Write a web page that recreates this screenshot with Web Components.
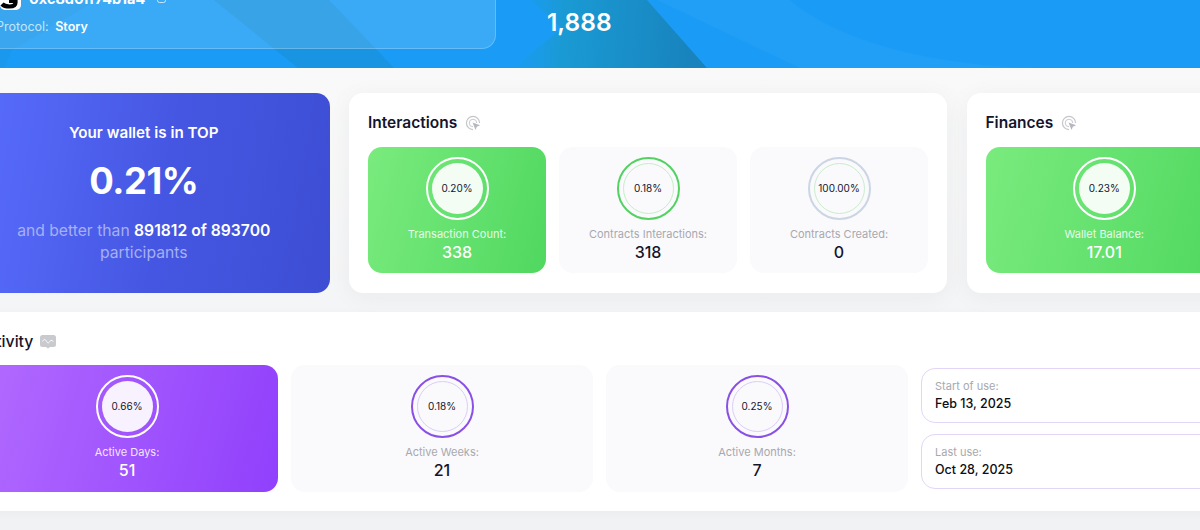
<!DOCTYPE html>
<html>
<head>
<meta charset="utf-8">
<title>Wallet stats</title>
<style>
  html, body { margin: 0; height: 100%; overflow: hidden; background: #f1f2f3; }
  body { font-family: Inter, "Noto Sans", sans-serif; color: #14152c; }
  /* page was photographed scrolled 42px to the right */
  stats-page { margin: 0 0 0 -42px; width: 1284px; }
</style>
</head>
<body>
<stats-page>
  <top-banner count="1,888" address="0xc8d0ff74b1a4" protocol="Story"></top-banner>
  <stats-band>
    <rank-card percent="0.21%" better="891812" total="893700"></rank-card>
    <stat-card heading="Interactions" style="--cols:repeat(3,1fr)">
      <stat-tile tone="green" active percent="0.20%" label="Transaction Count:" value="338"></stat-tile>
      <stat-tile tone="green" percent="0.18%" label="Contracts Interactions:" value="318"></stat-tile>
      <stat-tile tone="grey" percent="100.00%" label="Contracts Created:" value="0"></stat-tile>
    </stat-card>
    <stat-card heading="Finances" style="--cols:1fr">
      <stat-tile tone="green" active percent="0.23%" label="Wallet Balance:" value="17.01"></stat-tile>
    </stat-card>
  </stats-band>
  <activity-panel heading="Activity">
    <stat-tile tone="purple" active percent="0.66%" label="Active Days:" value="51"></stat-tile>
    <stat-tile tone="purple" percent="0.18%" label="Active Weeks:" value="21"></stat-tile>
    <stat-tile tone="purple" percent="0.25%" label="Active Months:" value="7"></stat-tile>
    <div style="display:flex;flex-direction:column;gap:11px;padding-top:3px">
      <date-box label="Start of use:" value="Feb 13, 2025"></date-box>
      <date-box label="Last use:" value="Oct 28, 2025"></date-box>
    </div>
  </activity-panel>
</stats-page>

<script>
class StatsPage extends HTMLElement {
  constructor() {
    super();
    const shadow = this.attachShadow({ mode: 'open' });
    shadow.innerHTML = `
      <style>:host { display: flex; flex-direction: column; }</style>
      <slot></slot>`;
  }
}

class TopBanner extends HTMLElement {
  constructor() {
    super();
    const shadow = this.attachShadow({ mode: 'open' });
    shadow.innerHTML = `
      <style>
        :host { display: block; position: relative; height: 68px; overflow: hidden; background: #1a9cf6; color: #fff; }
        .shapes { position: absolute; left: 42px; top: 0; width: 1200px; height: 68px; }
        .row { position: relative; display: flex; align-items: flex-start; height: 68px; }
        .glass {
          box-sizing: border-box; width: 538px; height: 49px;
          padding: 0 0 0 42px; display: flex; flex-direction: column;
          background: rgba(255,255,255,.14); border: 1px solid rgba(255,255,255,.22); border-top: 0; border-left: 0;
          border-bottom-right-radius: 14px;
        }
        .who { display: flex; align-items: flex-end; height: 11px; }
        .logo { flex: none; display: block; margin-right: 8px; margin-bottom: 1px; }
        .addr { font-size: 14.5px; font-weight: 700; line-height: 16px; white-space: nowrap; margin-bottom: 4.5px; }
        .copy { margin: 0 0 8px 12px; }
        .proto { font-size: 12.5px; line-height: 16px; margin: 8px 0 0 -4px; white-space: nowrap; color: rgba(255,255,255,.72); }
        .proto b { font-weight: 600; color: #fff; margin-left: 3px; }
        .count { font-size: 24.5px; font-weight: 600; line-height: 32px; margin: 6px 0 0 51px; }
      </style>
      <svg class="shapes" viewBox="0 0 1200 68" preserveAspectRatio="none">
        <defs>
          <linearGradient id="deep" gradientUnits="userSpaceOnUse" x1="490" y1="30" x2="695" y2="45">
            <stop offset="0" stop-color="#1a9cf6" stop-opacity="0"/>
            <stop offset=".35" stop-color="#1a9ad4"/>
            <stop offset="1" stop-color="#1883bd"/>
          </linearGradient>
        </defs>
        <path d="M214 0L298 68H394L329 0Z" fill="#1583b8" opacity=".32"/>
        <path d="M513 68L562 28L530 0H647L707 68Z" fill="url(#deep)"/>
        <path d="M12 50L97 0H0V68H4Z" fill="#1583b8" opacity=".14"/>
        <path d="M790 0C860 60 1000 68 1040 68H800L657 0Z" fill="#fff" opacity=".03"/>
      </svg>
      <div class="row">
        <div class="glass">
          <div class="who">
            <svg class="logo" width="21" height="20" viewBox="0 0 21 20">
              <rect width="21" height="20" rx="5" fill="#fff"/>
              <path d="M9 11H15.5V12.5C15.5 15.5 13 16.5 9.5 16.5C6.5 16.5 3.8 16 2 14" fill="none" stroke="#000" stroke-width="4.2"/>
            </svg>
            <span class="addr">${this.getAttribute('address')}</span>
            <svg class="copy" width="9" height="10" viewBox="0 0 9 10" fill="none" stroke="rgba(255,255,255,.7)"><rect x=".5" y=".5" width="8" height="9" rx="2"/></svg>
          </div>
          <div class="proto">Protocol: <b>${this.getAttribute('protocol')}</b></div>
        </div>
        <div class="count">${this.getAttribute('count')}</div>
      </div>`;
  }
}

class StatsBand extends HTMLElement {
  constructor() {
    super();
    const shadow = this.attachShadow({ mode: 'open' });
    shadow.innerHTML = `
      <style>
        :host {
          display: grid; grid-template-columns: 371.5px 598px 275.5px; column-gap: 19.5px;
          padding: 25px 0 19px; height: 200px;
          background: linear-gradient(#f9f9f9, #f4f5f6);
        }
      </style>
      <slot></slot>`;
  }
}

class RankCard extends HTMLElement {
  constructor() {
    super();
    const shadow = this.attachShadow({ mode: 'open' });
    shadow.innerHTML = `
      <style>
        :host {
          display: flex; flex-direction: column; align-items: center; box-sizing: border-box;
          padding: 29px 16px 0; border-radius: 14px; color: #fff; text-align: center;
          background: linear-gradient(100deg, #5a6eff 0%, #4557e2 55%, #3d4ed4 100%);
        }
        .top { font-size: 15.2px; font-weight: 600; line-height: 22px; }
        .pct { font-size: 36.5px; font-weight: 700; line-height: 48px; margin-top: 13px; letter-spacing: -.5px; }
        .rest { font-size: 15.7px; line-height: 22px; margin-top: 15px; color: #a6b0f2; width: 290px; }
        .rest b { font-weight: 600; color: #fff; }
      </style>
      <div class="top">Your wallet is in TOP</div>
      <div class="pct">${this.getAttribute('percent')}</div>
      <div class="rest">and better than <b>${this.getAttribute('better')} of ${this.getAttribute('total')}</b> participants</div>`;
  }
}

const CLICK_ICON = `
  <svg width="16" height="16" viewBox="0 0 17 17" fill="none" stroke="#c4c6cc" stroke-width="1.3">
    <path d="M15.5 8.5A7 7 0 1 0 8.5 15.5"/>
    <path d="M12.5 8.5A4 4 0 1 0 8.5 12.5" stroke-width="1"/>
    <path d="M8 8l8 3-3.4 1.4L11.2 16z" fill="#b6b8bf" stroke="none"/>
  </svg>`;

class StatCard extends HTMLElement {
  constructor() {
    super();
    const shadow = this.attachShadow({ mode: 'open' });
    shadow.innerHTML = `
      <style>
        :host {
          display: block; box-sizing: border-box; padding: 20px 19px 20px 19px;
          background: #fff; border-radius: 14px; box-shadow: 0 4px 24px rgba(30,40,60,.05);
        }
        h2 { display: flex; align-items: center; gap: 8px; margin: 0 0 14px; font-size: 15.5px; font-weight: 600; line-height: 20px; }
        .tiles { display: grid; grid-template-columns: var(--cols); column-gap: 13px; }
      </style>
      <h2>${this.getAttribute('heading')} ${CLICK_ICON}</h2>
      <div class="tiles"><slot></slot></div>`;
  }
}

class ActivityPanel extends HTMLElement {
  constructor() {
    super();
    const shadow = this.attachShadow({ mode: 'open' });
    shadow.innerHTML = `
      <style>
        :host { display: block; padding: 20px 18px 19px; background: #fff; height: 160px; --tile-h: 127px; box-shadow: 0 2px 10px rgba(30,40,60,.03); }
        h2 { display: flex; align-items: center; gap: 7px; margin: 0 0 13px; font-size: 15.8px; font-weight: 500; line-height: 20px; }
        .tiles { display: grid; grid-template-columns: repeat(4, 302px); column-gap: 13px; height: 127px; }
      </style>
      <h2>${this.getAttribute('heading')}
        <svg width="16" height="14" viewBox="0 0 16 14">
          <rect width="16" height="12" rx="2.5" fill="#c9cacd"/>
          <path d="M6 12h4l-2 1.6z" fill="#c9cacd"/>
          <path d="M2.6 6.4c1.4-2.6 2.6-2.6 4 0s2.4 1.4 3.2 0 1.8-1.2 3.6 0" fill="none" stroke="#fff" stroke-width="1"/>
        </svg>
      </h2>
      <div class="tiles"><slot></slot></div>`;
  }
}

const TONES = {
  green: { from: '#7aeb7e', to: '#50d860', ring: '#54d163', inner: '#c4eec8', sub: '#e6fbe8' },
  purple: { from: '#b26bff', to: '#9040fc', ring: '#8a50e6', inner: '#dbcdf6', sub: '#f3e6ff' },
  grey: { from: '#fff', to: '#fff', ring: '#cbd5e3', inner: '#c9eccd', sub: '#aaa' }
};

class StatTile extends HTMLElement {
  constructor() {
    super();
    const shadow = this.attachShadow({ mode: 'open' });
    const tone = TONES[this.getAttribute('tone')];
    const active = this.hasAttribute('active');
    shadow.innerHTML = `
      <style>
        :host {
          display: flex; flex-direction: column; align-items: center; box-sizing: border-box;
          height: var(--tile-h, 126px); padding-top: 10px; border-radius: 14px;
          background: ${active ? `linear-gradient(105deg, ${tone.from}, ${tone.to})` : '#fafafc'};
          color: ${active ? '#fff' : '#14152c'};
        }
        .ring {
          box-sizing: border-box; width: 63px; height: 63px; border-radius: 50%; flex: none;
          border: 2px solid ${active ? '#fff' : tone.ring};
          display: flex; align-items: center; justify-content: center;
        }
        .core {
          box-sizing: border-box; width: 51px; height: 51px; padding-bottom: 1px; border-radius: 50%;
          display: flex; align-items: center; justify-content: center;
          font-size: 10px; color: #14152c; white-space: nowrap;
          ${active ? 'background: rgba(255,255,255,.92);' : `border: 1px solid ${tone.inner};`}
        }
        .label { font-size: 11px; line-height: 14px; margin-top: 7px; color: ${active ? tone.sub : '#a8a8ae'}; white-space: nowrap; }
        .value { font-size: 16px; font-weight: 500; line-height: 20px; margin-top: 1px; }
      </style>
      <div class="ring"><div class="core">${this.getAttribute('percent')}</div></div>
      <div class="label">${this.getAttribute('label')}</div>
      <div class="value">${this.getAttribute('value')}</div>`;
  }
}

class DateBox extends HTMLElement {
  constructor() {
    super();
    const shadow = this.attachShadow({ mode: 'open' });
    shadow.innerHTML = `
      <style>
        :host {
          display: flex; flex-direction: column; justify-content: center; box-sizing: border-box;
          height: 55px; padding: 0 13px; border: 1px solid #e3d5f7; border-radius: 14px; background: #fff;
        }
        .label { font-size: 11px; line-height: 14px; color: #a8a8ae; }
        .value { font-size: 12.5px; font-weight: 500; line-height: 18px; margin-top: 2px; color: #0d0d14; }
      </style>
      <div class="label">${this.getAttribute('label')}</div>
      <div class="value">${this.getAttribute('value')}</div>`;
  }
}

customElements.define('stats-page', StatsPage);
customElements.define('top-banner', TopBanner);
customElements.define('stats-band', StatsBand);
customElements.define('rank-card', RankCard);
customElements.define('stat-card', StatCard);
customElements.define('activity-panel', ActivityPanel);
customElements.define('stat-tile', StatTile);
customElements.define('date-box', DateBox);
</script>
</body>
</html>
